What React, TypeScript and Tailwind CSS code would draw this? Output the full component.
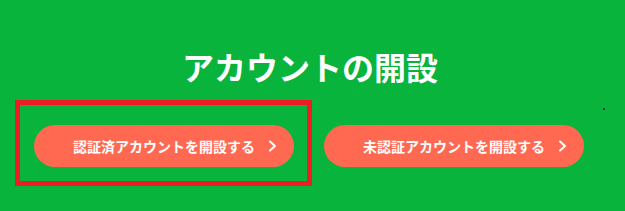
import React from 'react';

const font = { fontFamily: '"Noto Sans CJK JP", "Noto Sans", sans-serif' };

const Chevron = () => (
  <svg width="9" height="12" viewBox="0 0 9 12" className="shrink-0">
    <polyline points="2,1.5 7,6 2,10.5" fill="none" stroke="white" strokeWidth="2" strokeLinecap="round" strokeLinejoin="round" />
  </svg>
);

const OpenButton: React.FC<{ label: string }> = ({ label }) => (
  <button className="flex items-center w-[260px] h-[42px] rounded-full bg-[#ff6952] pl-[39px] pr-[17px] text-white text-[14px] font-bold leading-none cursor-pointer">
    <span>{label}</span>
    <span className="ml-auto">
      <Chevron />
    </span>
  </button>
);

export default function App() {
  return (
    <div style={font} className="relative w-full h-[211px] bg-[#08b43c] flex flex-col items-center overflow-hidden">
      <h1 className="pt-[50px] text-[32px] leading-[32px] font-bold text-white -ml-[5px]">
        アカウントの開設
      </h1>
      <div className="mt-[43px] flex gap-[30px] -ml-[7px]">
        <div className="relative">
          <OpenButton label="認証済アカウントを開設する" />
          <div className="absolute -left-[19px] -top-[25px] w-[297px] h-[86px] border-[5px] border-[#ee1c25] pointer-events-none" />
        </div>
        <OpenButton label="未認証アカウントを開設する" />
      </div>
      <span className="absolute left-[603px] top-[108px] w-[2px] h-[2px] bg-[#333]" />
    </div>
  );
}
